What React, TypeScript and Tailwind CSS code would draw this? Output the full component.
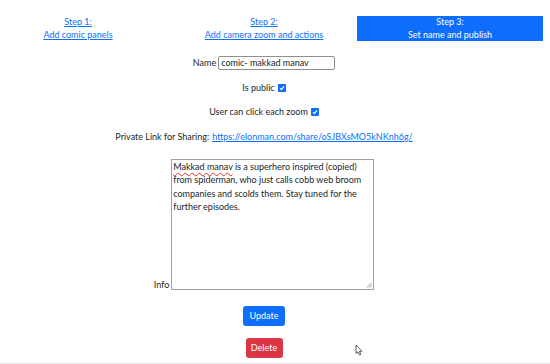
import React from 'react'

function Check() {
  return (
    <span className="inline-flex h-[8px] w-[8px] items-center justify-center rounded-[1px] bg-[#0d6efd] align-middle">
      <svg width="6" height="6" viewBox="0 0 6 6">
        <path d="M1 3.2 L2.4 4.6 L5 1.4" stroke="white" strokeWidth="1.2" fill="none" />
      </svg>
    </span>
  )
}

export default function App() {
  return (
    <div className="relative h-[364px] w-[550px] overflow-hidden bg-white text-[9px] text-[#212529]" style={{ fontFamily: 'Lato, "DejaVu Sans", sans-serif' }}>
      <div className="w-[528px]">
        {/* steps */}
        <div className="-mx-[15px] mt-[16px] grid grid-cols-3 leading-[12.5px]">
          <div className="flex h-[25px] flex-col items-center justify-center">
            <a className="text-[#0d6efd] underline">Step 1:</a>
            <a className="text-[#0d6efd] underline">Add comic panels</a>
          </div>
          <div className="flex h-[25px] flex-col items-center justify-center">
            <a className="text-[#0d6efd] underline">Step 2:</a>
            <a className="text-[#0d6efd] underline">Add camera zoom and actions</a>
          </div>
          <div className="flex h-[25px] flex-col items-center justify-center bg-[#0d6efd] text-white">
            <span>Step 3:</span>
            <span>Set name and publish</span>
          </div>
        </div>

        {/* form */}
        <div className="flex flex-col items-center">
          <div className="mt-[15px] flex h-[13px] items-center gap-[2px]">
            <span>Name</span>
            <div className="flex h-[14px] w-[117px] items-center rounded-[2px] border border-[#8f8f8f] px-[2px]">comic- makkad manav</div>
          </div>
          <div className="mt-[12px] flex h-[13px] items-center gap-[3px]">
            <span>Is public</span>
            <Check />
          </div>
          <div className="mt-[11px] flex h-[13px] items-center gap-[3px]">
            <span>User can click each zoom</span>
            <Check />
          </div>
          <div className="mt-[12px] flex h-[13px] items-center gap-[3px]">
            <span>Private Link for Sharing:</span>
            <a className="text-[#0d6efd] underline">https://elonman.com/share/oSJBXsMO5kNKnh6g/</a>
          </div>
          <div className="mt-[16px] flex items-end gap-[2px]">
            <span className="leading-[10px]">Info</span>
            <div className="relative h-[131px] w-[203px] border border-[#a0a0a0] px-[1px] leading-[13.3px]">
              <span className="underline decoration-wavy decoration-[#e0312b] decoration-[0.8px] underline-offset-[2px]">Makkad manav</span>{' '}
              is a superhero inspired (copied) from spiderman, who just calls cobb web broom companies and scolds them. Stay tuned for the further episodes.
              <svg className="absolute bottom-[1px] right-[1px]" width="6" height="6" viewBox="0 0 6 6">
                <path d="M5.5 1 L1 5.5 M5.5 3.5 L3.5 5.5" stroke="#777" strokeWidth="0.8" />
              </svg>
            </div>
          </div>
          <button className="mt-[16px] h-[20px] w-[42px] rounded-[3px] bg-[#0d6efd] text-white">Update</button>
          <button className="mt-[12px] h-[20px] w-[37px] rounded-[3px] bg-[#dc3545] text-white">Delete</button>
        </div>
      </div>
      <div className="absolute bottom-0 left-0 h-[1px] w-full bg-[#e5e5e5]" />
      <svg className="absolute left-[355px] top-[344px]" width="9" height="12" viewBox="0 0 9 12">
        <path d="M1 1 L1 9.5 L3 7.8 L4.5 11 L5.8 10.4 L4.4 7.3 L7 7.3 Z" fill="white" stroke="#333" strokeWidth="0.8" />
      </svg>
    </div>
  )
}
